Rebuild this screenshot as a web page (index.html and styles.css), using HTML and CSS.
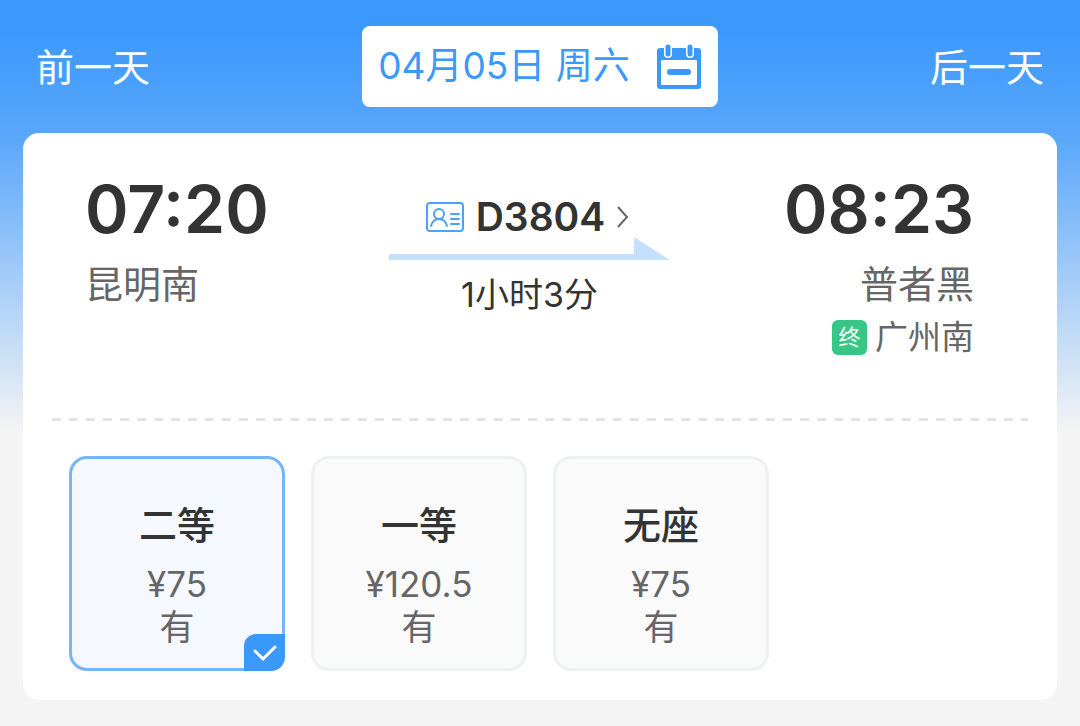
FILE: index.html
```html
<!DOCTYPE html>
<html lang="zh-CN">
<head>
    <meta charset="UTF-8">
    <meta name="viewport" content="width=device-width, initial-scale=1.0">
    <title>车票信息</title>
    <link rel="stylesheet" href="styles.css">
</head>
<body>
<header class="day-bar">
    <button type="button" class="day-btn prev">前一天</button>
    <button type="button" class="date-btn">
        <span>04月05日 周六</span>
        <svg class="calendar-icon" viewBox="0 0 46 46" aria-hidden="true">
            <path d="M4 5h38a3 3 0 0 1 3 3v35a3 3 0 0 1-3 3H4a3 3 0 0 1-3-3V8a3 3 0 0 1 3-3z" fill="#3b99fc"/>
            <rect x="5" y="17" width="36" height="25" rx="1" fill="#fff"/>
            <path d="M12 4v7M34 4v7" stroke="#fff" stroke-width="8" stroke-linecap="round"/>
            <path d="M12 4v7M34 4v7" stroke="#3b99fc" stroke-width="5" stroke-linecap="round"/>
            <path d="M14 29h18" stroke="#3b99fc" stroke-width="6" stroke-linecap="round"/>
        </svg>
    </button>
    <button type="button" class="day-btn next">后一天</button>
</header>

<main class="card">
    <section class="route">
        <div class="stop">
            <div class="time">07:20</div>
            <div class="station">昆明南</div>
        </div>
        <div class="train">
            <a href="#" class="train-no">
                <svg class="id-icon" viewBox="0 0 38 30" fill="none" stroke="#4ba1fc" aria-hidden="true">
                    <rect x="1" y="1" width="36" height="28" rx="3" stroke-width="2"/>
                    <circle cx="13" cy="12" r="5" stroke-width="2"/>
                    <path d="M5 24c1-4 4-7 8-7s7 3 8 7" stroke-width="2" stroke-linecap="round"/>
                    <path d="M25 12h8M25 17h8M25 22h8" stroke-width="2" stroke-linecap="round"/>
                </svg>
                <span>D3804</span>
                <svg class="chevron" viewBox="0 0 12 24" fill="none" aria-hidden="true">
                    <path d="M1 2l9 10L1 22" stroke="#666" stroke-width="2"/>
                </svg>
            </a>
            <svg class="arrow" viewBox="0 0 281 23" aria-hidden="true">
                <path d="M0 17h245V0l36 23H0z" fill="#c5e0fe"/>
            </svg>
            <div class="duration">1小时3分</div>
        </div>
        <div class="stop arrive">
            <div class="time">08:23</div>
            <div class="station">普者黑</div>
            <div class="terminal"><span class="tag">终</span>广州南</div>
        </div>
    </section>

    <div class="divider"></div>

    <section class="seats">
        <label class="seat">
            <input type="radio" name="seat" checked>
            <span class="seat-name">二等</span>
            <span class="seat-info">¥75</span>
            <span class="seat-info">有</span>
            <span class="check">
                <svg viewBox="0 0 24 18" fill="none" aria-hidden="true">
                    <path d="M2 7l8 8L22 3" stroke="#fff" stroke-width="3" stroke-linecap="round" stroke-linejoin="round"/>
                </svg>
            </span>
        </label>
        <label class="seat">
            <input type="radio" name="seat">
            <span class="seat-name">一等</span>
            <span class="seat-info">¥120.5</span>
            <span class="seat-info">有</span>
        </label>
        <label class="seat">
            <input type="radio" name="seat">
            <span class="seat-name">无座</span>
            <span class="seat-info">¥75</span>
            <span class="seat-info">有</span>
        </label>
    </section>
</main>
</body>
</html>
```
FILE: styles.css
```css
* {
    box-sizing: border-box;
    margin: 0;
    padding: 0;
}
body {
    min-height: 100vh;
    font-family: Inter, 'Noto Sans CJK SC', sans-serif;
    color: #333;
    background: #f4f4f4 linear-gradient(#3b99fc 30px, #57a6fb 132px, #f4f4f4 432px) no-repeat;
}
button {
    border: none;
    background: none;
    font-family: inherit;
    cursor: pointer;
}

/* 日期切换 */
.day-bar {
    display: grid;
    grid-template-columns: 1fr auto 1fr;
    align-items: center;
    padding: 26px 36px;
}
.day-btn {
    color: #fff;
    font-size: 38px;
    line-height: 56px;
}
.prev {
    justify-self: start;
}
.next {
    justify-self: end;
}
.date-btn {
    display: flex;
    align-items: center;
    gap: 26px;
    height: 81px;
    padding: 0 16px 2px;
    border-radius: 8px;
    background-color: #fff;
    color: #3b99fc;
    font-size: 37px;
    line-height: 56px;
    white-space: nowrap;
}
.calendar-icon {
    width: 46px;
    height: 46px;
}

/* 车次信息 */
.card {
    margin: 0 23px;
    padding-bottom: 29px;
    border-radius: 16px;
    background-color: #fff;
}
.route {
    display: grid;
    grid-template-columns: 1fr auto 1fr;
    min-height: 285px;
    padding: 38px 83px 0 62px;
}
.arrive {
    text-align: right;
}
.time {
    font-size: 66px;
    font-weight: 600;
    line-height: 76px;
}
.station {
    margin-top: 9px;
    color: #666;
    font-size: 38px;
    line-height: 56px;
}
.terminal {
    display: flex;
    align-items: center;
    justify-content: flex-end;
    gap: 8px;
    color: #666;
    font-size: 33px;
    line-height: 50px;
}
.tag {
    width: 35px;
    border-radius: 6px;
    background-color: #36c786;
    color: #fff;
    font-size: 22px;
    line-height: 35px;
    text-align: center;
}
.train {
    display: flex;
    flex-direction: column;
    align-items: center;
    padding-top: 26px;
}
.train-no {
    display: flex;
    align-items: center;
    gap: 12px;
    margin-right: 4px;
    color: #333;
    font-size: 39px;
    font-weight: 600;
    line-height: 40px;
    text-decoration: none;
}
.id-icon {
    width: 38px;
    height: 30px;
}
.chevron {
    width: 12px;
    height: 24px;
}
.arrow {
    width: 281px;
    height: 23px;
    margin-bottom: 10px;
}
.duration {
    font-size: 34px;
    line-height: 50px;
}
.divider {
    height: 3px;
    margin: 0 29px;
    background: linear-gradient(to right, #e3e3e3 9px, transparent 9px) 0 0 / 17px 3px;
}

/* 席别 */
.seats {
    display: flex;
    flex-wrap: wrap;
    gap: 26px;
    padding: 35px 46px 0;
}
.seat {
    position: relative;
    display: flex;
    flex-direction: column;
    align-items: center;
    width: 216px;
    height: 215px;
    padding-top: 38px;
    border: 3px solid #eff0f0;
    border-radius: 18px;
    background-color: #fafafa;
    cursor: pointer;
}
.seat:has(input:checked) {
    border-color: #74b5fd;
    background-color: #f5f9ff;
}
.seat input {
    position: absolute;
    opacity: 0;
}
.seat-name {
    margin-bottom: 10px;
    font-size: 38px;
    font-weight: 500;
    line-height: 56px;
}
.seat-info {
    color: #666;
    font-size: 35px;
    line-height: 43px;
}
.check {
    position: absolute;
    right: -3px;
    bottom: -3px;
    display: flex;
    align-items: center;
    justify-content: center;
    width: 41px;
    height: 37px;
    border-radius: 12px 0 14px 0;
    background-color: #3b99fc;
}
.check svg {
    width: 24px;
    height: 18px;
}
```
